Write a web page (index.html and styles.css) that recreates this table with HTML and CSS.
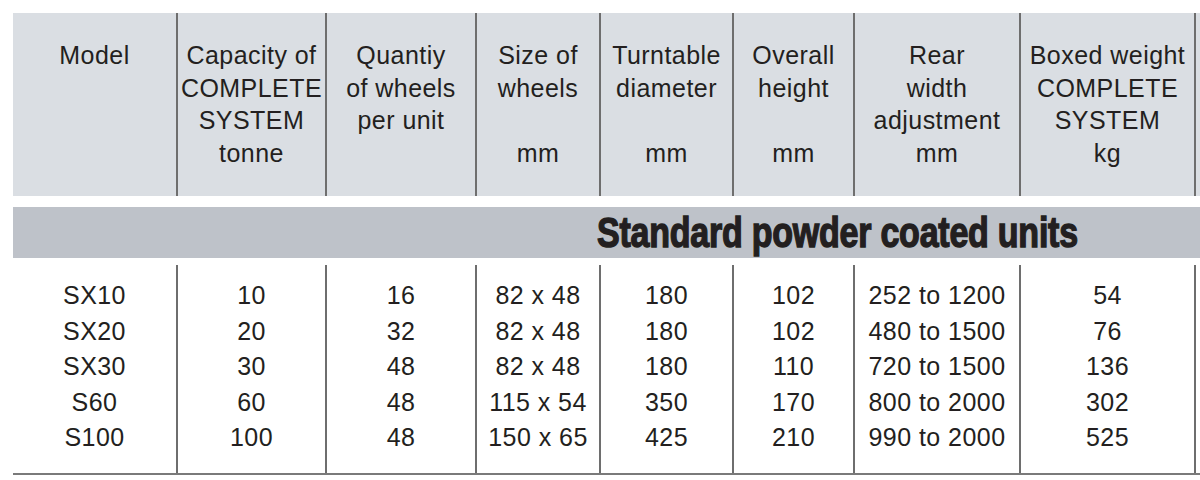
FILE: index.html
```html
<!DOCTYPE html>
<html lang="en">
<head>
<meta charset="utf-8">
<title>Turntable specifications</title>
<link rel="stylesheet" href="styles.css">
</head>
<body>
<div class="sheet">
  <div class="grid head">
    <div class="cell">Model</div>
    <div class="cell">Capacity of<br>COMPLETE<br>SYSTEM<br>tonne</div>
    <div class="cell">Quantiy<br>of wheels<br>per unit</div>
    <div class="cell">Size of<br>wheels<br><br>mm</div>
    <div class="cell">Turntable<br>diameter<br><br>mm</div>
    <div class="cell">Overall<br>height<br><br>mm</div>
    <div class="cell">Rear<br>width<br>adjustment<br>mm</div>
    <div class="cell">Boxed weight<br>COMPLETE<br>SYSTEM<br>kg</div>
    <div class="filler"></div>
  </div>

  <div class="band"><span class="band-text">Standard powder coated units</span></div>

  <div class="grid body">
    <div class="cell">SX10<br>SX20<br>SX30<br>S60<br>S100</div>
    <div class="cell">10<br>20<br>30<br>60<br>100</div>
    <div class="cell">16<br>32<br>48<br>48<br>48</div>
    <div class="cell">82 x 48<br>82 x 48<br>82 x 48<br>115 x 54<br>150 x 65</div>
    <div class="cell">180<br>180<br>180<br>350<br>425</div>
    <div class="cell">102<br>102<br>110<br>170<br>210</div>
    <div class="cell">252 to 1200<br>480 to 1500<br>720 to 1500<br>800 to 2000<br>990 to 2000</div>
    <div class="cell">54<br>76<br>136<br>302<br>525</div>
    <div class="filler"></div>
  </div>
</div>
</body>
</html>
```

FILE: styles.css
```css
html, body {
  margin: 0;
  padding: 0;
  background: #ffffff;
  overflow: hidden;
}

.sheet {
  padding: 13px 0 0 13px;
  width: 1187px;
  font-family: "Liberation Sans", Arial, sans-serif;
  font-size: 25px;
  letter-spacing: 0.45px;
  color: #231f20;
}

.grid {
  display: grid;
  grid-template-columns: 165px 149px 150px 124px 133px 121px 166px 175px 1fr;
}

.cell {
  text-align: center;
  border-right: 2px solid #6e6e6e;
  white-space: nowrap;
}

.head {
  background: #dadee3;
  height: 183px;
}

.head .cell {
  padding-top: 26px;
  line-height: 32.7px;
}

.band {
  margin-top: 11px;
  height: 51px;
  background: #bec2c9;
  padding-left: 584px;
  line-height: 51px;
  overflow: hidden;
}

.band-text {
  display: inline-block;
  font-size: 42px;
  font-weight: bold;
  letter-spacing: -0.3px;
  color: #231f20;
  -webkit-text-stroke: 1.4px #231f20;
  transform: scaleX(0.81);
  transform-origin: left center;
  white-space: nowrap;
}

.body {
  margin-top: 7px;
  border-bottom: 2px solid #7a7a7a;
}

.body .cell {
  padding-top: 13px;
  padding-bottom: 17px;
  line-height: 35.5px;
}
```
